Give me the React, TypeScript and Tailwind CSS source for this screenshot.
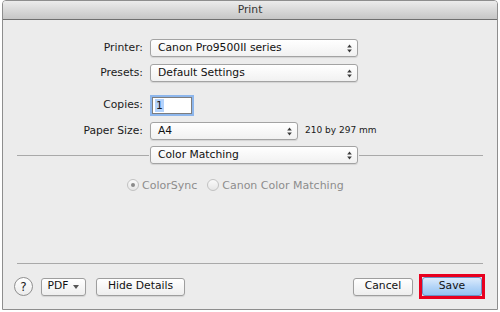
import React from "react";

const Arrows: React.FC = () => (
  <svg width="5" height="9" viewBox="0 0 5 9" className="shrink-0">
    <path d="M2.5 0.5 L4.8 3.5 L0.2 3.5 Z" fill="#3a3a3a" />
    <path d="M2.5 8.5 L4.8 5.5 L0.2 5.5 Z" fill="#3a3a3a" />
  </svg>
);

const Popup: React.FC<{ label: string; className: string }> = ({ label, className }) => (
  <div
    className={`${className} h-[18px] flex items-center justify-between rounded-[3px] border border-[#a3a3a3] bg-gradient-to-b from-white to-[#f1f1f1] shadow-[0_1px_1px_rgba(0,0,0,0.10)] pl-[7px] pr-[5px] text-[#111]`}
  >
    <span className="leading-none">{label}</span>
    <Arrows />
  </div>
);

const Radio: React.FC<{ checked?: boolean; label: string }> = ({ checked, label }) => (
  <div className="flex items-center">
    <div className="w-[12px] h-[12px] rounded-full border border-[#c2c2c2] bg-gradient-to-b from-[#fafafa] to-[#e6e6e6] flex items-center justify-center">
      {checked && <div className="w-[4px] h-[4px] rounded-full bg-[#8a8a8a]" />}
    </div>
    <span className="ml-[3px] text-[11px] text-[#8c8c8c] leading-none">{label}</span>
  </div>
);

const Btn: React.FC<{ className: string; children: React.ReactNode }> = ({ className, children }) => (
  <div
    className={`${className} h-[18px] flex items-center justify-center rounded-[3px] border border-[#9e9e9e] bg-gradient-to-b from-white to-[#eeeeee] shadow-[0_1px_1px_rgba(0,0,0,0.10)] text-[#111] leading-none`}
  >
    {children}
  </div>
);

export default function App() {
  return (
    <div className="w-[500px] h-[312px] bg-white font-['DejaVu_Sans',sans-serif] text-[10.75px] text-[#1a1a1a]">
      <div className="ml-[2px] w-[496px] h-[310px] border border-[#8e8e8e] rounded-t-[4px] flex flex-col overflow-hidden">
        {/* title bar */}
        <div className="h-[19px] shrink-0 bg-gradient-to-b from-[#ececec] to-[#c6c6c6] border-b border-[#6f6f6f] flex items-center justify-center text-[#333]">
          Print
        </div>

        <div className="flex-1 bg-[#ececec] flex flex-col pb-[10px]">
          <div className="mt-[19px] flex items-center h-[18px]">
            <div className="w-[140px] text-right">Printer:</div>
            <Popup label="Canon Pro9500II series" className="ml-[7px] w-[208px]" />
          </div>

          <div className="mt-[7px] flex items-center h-[18px]">
            <div className="w-[140px] text-right">Presets:</div>
            <Popup label="Default Settings" className="ml-[7px] w-[208px]" />
          </div>

          <div className="mt-[13px] flex items-center h-[20px]">
            <div className="w-[140px] text-right">Copies:</div>
            <div className="ml-[9px] w-[40px] h-[17px] bg-white border border-[#7d7d7d] shadow-[0_0_0_2px_#8db6ec] flex items-center pl-[2px]">
              <span className="bg-[#b4d3fc] leading-[13px] px-[1px]">1</span>
            </div>
          </div>

          <div className="mt-[7px] flex items-center h-[18px]">
            <div className="w-[140px] text-right">Paper Size:</div>
            <Popup label="A4" className="ml-[7px] w-[148px]" />
            <span className="ml-[7px] text-[9px]">210 by 297 mm</span>
          </div>

          <div className="mt-[6px] flex items-center h-[18px]">
            <div className="ml-[14px] w-[132px] h-px bg-[#a9a9a9]" />
            <Popup label="Color Matching" className="ml-[1px] w-[208px]" />
            <div className="ml-[1px] w-[124px] h-px bg-[#a9a9a9]" />
          </div>

          <div className="mt-[14px] flex items-center h-[14px] pl-[124px] gap-[10px]">
            <Radio checked label="ColorSync" />
            <Radio label="Canon Color Matching" />
          </div>

          <div className="flex-1" />

          <div className="mx-[14px] h-px bg-[#a9a9a9]" />

          <div className="mt-[10px] h-[25px] flex items-center pl-[11px] pr-[12px]">
            <div className="w-[19px] h-[19px] rounded-full border border-[#8f8f8f] bg-gradient-to-b from-white to-[#ececec] flex items-center justify-center text-[12px] leading-none text-[#222]">
              ?
            </div>
            <Btn className="ml-[8px] w-[45px]">
              <span>PDF</span>
              <svg width="6" height="4" viewBox="0 0 6 4" className="ml-[5px]">
                <path d="M0 0 L6 0 L3 4 Z" fill="#555" />
              </svg>
            </Btn>
            <Btn className="ml-[10px] w-[89px]">Hide Details</Btn>
            <div className="flex-1" />
            <Btn className="w-[60px]">Cancel</Btn>
            <div className="ml-[6px] border-[3px] border-[#e8001f] h-[25px] w-[66px] flex items-center">
              <div className="w-[60px] h-[19px] flex items-center justify-center rounded-[3px] border border-[#6d8fc2] bg-gradient-to-b from-[#dcebfc] via-[#b5d5f7] to-[#94c3f2] text-[#111] leading-none">
                Save
              </div>
            </div>
          </div>
        </div>
      </div>
    </div>
  );
}
